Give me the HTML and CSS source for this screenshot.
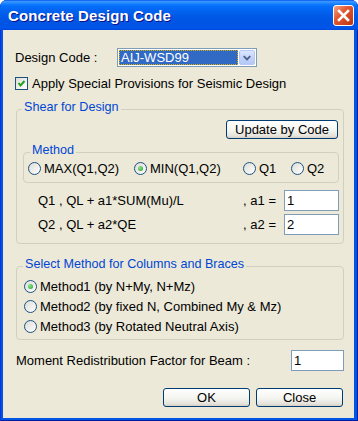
FILE: index.html
```html
<!doctype html>
<html lang="en">
  <head>
    <meta charset="UTF-8" />
    <title>Concrete Design Code</title>
    <link rel="stylesheet" href="styles.css">
  </head>
  <body>
    <div class="window">
      <div class="titlebar">
        <span class="title">Concrete Design Code</span>
        <span class="close-btn">
          <svg viewBox="0 0 19 19" width="19" height="19">
            <path d="M5 5L14 14M14 5L5 14" stroke="#FFFFFF" stroke-width="2.6" stroke-linecap="square" />
          </svg>
        </span>
      </div>
      <div class="client">
        <div class="code-row">
          <span class="code-label">Design Code :</span>
          <div class="select">
            <span class="select-value">AIJ-WSD99</span>
            <span class="select-arrow">
              <svg viewBox="0 0 15 15" width="15" height="15">
                <path d="M4 6L7.5 9.5L11 6" fill="none" stroke="#4d6185" stroke-width="2" />
              </svg>
            </span>
          </div>
        </div>
        <div class="check-row">
          <span class="checkbox">
            <svg viewBox="0 0 11 11" width="11" height="11">
              <path d="M2.5 5L4.5 7.5L8.5 3" fill="none" stroke="#21a121" stroke-width="2" />
            </svg>
          </span>
          Apply Special Provisions for Seismic Design
        </div>

        <fieldset class="group shear">
          <legend>Shear for Design</legend>
          <div class="update-row">
            <button class="btn update-btn">Update by Code</button>
          </div>
          <fieldset class="group method">
            <legend>Method</legend>
            <div class="radio-row">
              <span class="radio-item item-max"><span class="radio"></span>MAX(Q1,Q2)</span>
              <span class="radio-item item-min"><span class="radio on"><span class="dot"></span></span>MIN(Q1,Q2)</span>
              <span class="radio-item item-q1"><span class="radio"></span>Q1</span>
              <span class="radio-item"><span class="radio"></span>Q2</span>
            </div>
          </fieldset>
          <div class="formula-row">
            <span class="formula">Q1 , QL + a1*SUM(Mu)/L</span>
            <span class="coef">, a1 =</span>
            <input class="field" type="text" value="1" />
          </div>
          <div class="formula-row second">
            <span class="formula">Q2 , QL + a2*QE</span>
            <span class="coef">, a2 =</span>
            <input class="field" type="text" value="2" />
          </div>
        </fieldset>

        <fieldset class="group columns">
          <legend>Select Method for Columns and Braces</legend>
          <div class="column-option"><span class="radio on"><span class="dot"></span></span>Method1 (by N+My, N+Mz)</div>
          <div class="column-option"><span class="radio"></span>Method2 (by fixed N, Combined My &amp; Mz)</div>
          <div class="column-option"><span class="radio"></span>Method3 (by Rotated Neutral Axis)</div>
        </fieldset>

        <div class="moment-row">
          <span class="moment-label">Moment Redistribution Factor for Beam :</span>
          <input class="field moment-field" type="text" value="1" />
        </div>

        <div class="button-row">
          <button class="btn dialog-btn">OK</button>
          <button class="btn dialog-btn">Close</button>
        </div>
      </div>
    </div>
  </body>
</html>
```

FILE: styles.css
```css
* {
  box-sizing: border-box;
}

body {
  margin: 0;
  background: #ffffff;
  font-family: 'Liberation Sans', Arial, sans-serif;
  font-size: 13px;
  color: #000000;
}

.window {
  width: 358px;
  height: 421px;
  display: flex;
  flex-direction: column;
  background: #0055e5;
  border-radius: 7px 7px 0 0;
  box-shadow: inset 1px 0 #0831d9, inset -1px 0 #001ea0, inset 0 -1px #001ea0;
  overflow: hidden;
}

.titlebar {
  height: 30px;
  flex: none;
  display: flex;
  align-items: center;
  justify-content: space-between;
  padding: 0 4px 0 8px;
  border-radius: 7px 7px 0 0;
  background: linear-gradient(
    to bottom,
    #0058ee 0%,
    #3a93ff 5%,
    #288eff 9%,
    #127dff 14%,
    #036ffc 20%,
    #0262ee 38%,
    #0057e5 60%,
    #0054e3 82%,
    #0055eb 92%,
    #0048dc 100%
  );
}

.title {
  color: #ffffff;
  font-weight: bold;
  font-size: 15px;
  letter-spacing: 0.1px;
  text-shadow: 1px 1px #0f1089;
}

.close-btn {
  width: 21px;
  height: 21px;
  border: 1px solid #ffffff;
  border-radius: 3px;
  background: linear-gradient(135deg, #f0a58a 0%, #e2582f 40%, #cc4420 75%, #b8350f 100%);
  display: flex;
  align-items: center;
  justify-content: center;
}

.client {
  flex: 1;
  margin: 0 4px 3px 3px;
  background: #ece9d8;
  padding: 18px 10px 0 13px;
  display: flex;
  flex-direction: column;
}

/* top rows */

.code-row {
  display: flex;
  align-items: center;
  height: 19px;
  margin-left: -1px;
}

.code-label {
  width: 102px;
}

.select {
  width: 140px;
  height: 19px;
  border: 1px solid #7f9db9;
  background: #ffffff;
  display: flex;
  padding: 1px;
}

.select-value {
  flex: 1;
  background: #316ac5;
  color: #ffffff;
  border: 1px dotted #e0b000;
  padding-left: 1px;
  line-height: 13px;
}

.select-arrow {
  width: 16px;
  margin-left: 1px;
  border: 1px solid #b7c8f3;
  border-radius: 2px;
  background: linear-gradient(#dce6ff, #c3d3fd 50%, #b4c8f5);
  display: flex;
  align-items: center;
  justify-content: center;
}

.check-row {
  display: flex;
  align-items: center;
  gap: 4px;
  height: 13px;
  margin: 10px 0 0 -1px;
}

.checkbox {
  width: 13px;
  height: 13px;
  border: 1px solid #1c5180;
  background: linear-gradient(135deg, #dcdcd7, #ffffff);
  display: flex;
  align-items: center;
  justify-content: center;
}

/* group boxes */

.group {
  margin: 0;
  min-width: 0;
  border: 1px solid #d0d0bf;
  border-radius: 4px;
}

.group legend {
  color: #0046d5;
  font-size: 12.6px;
  line-height: 14px;
  padding: 0 2px 4px;
}

.shear {
  margin-top: 10px;
  padding: 2px 4px 8px 6px;
}

.shear > legend {
  margin-left: -1px;
}

.update-row {
  display: flex;
  justify-content: flex-end;
  padding-right: 1px;
}

.btn {
  font: inherit;
  color: #000000;
  height: 19px;
  padding: 0;
  border: 1px solid #003c74;
  border-radius: 3px;
  background: linear-gradient(#ffffff, #f4f4f0 55%, #e6e4dc 85%, #d6d0c5);
}

.update-btn {
  width: 112px;
}

.method {
  margin-top: 4px;
  padding: 0 4px 7px 4px;
}

.method > legend {
  margin-left: 2px;
}

.radio-row {
  display: flex;
  align-items: center;
  height: 14px;
}

.radio-item {
  display: flex;
  align-items: center;
  gap: 3px;
}

.item-max {
  width: 106px;
}

.item-min {
  width: 109px;
}

.item-q1 {
  width: 48px;
}

.radio {
  width: 13px;
  height: 13px;
  flex: none;
  border: 1px solid #1c5180;
  border-radius: 50%;
  background: linear-gradient(135deg, #dcdcd7, #ffffff);
  display: flex;
  align-items: center;
  justify-content: center;
}

.dot {
  width: 5px;
  height: 5px;
  border-radius: 50%;
  background: radial-gradient(circle at 35% 35%, #8fe48f, #21a121);
}

.formula-row {
  display: flex;
  align-items: center;
  margin-top: 7px;
  padding-left: 15px;
}

.formula-row.second {
  margin-top: 3px;
}

.formula {
  flex: 1;
}

.coef {
  margin-right: 8px;
}

.field {
  width: 55px;
  height: 21px;
  margin: 0;
  border: 1px solid #7f9db9;
  background: #ffffff;
  padding: 0 2px;
  font: inherit;
  color: #000000;
}

.columns {
  margin-top: 13px;
  padding: 1px 4px 3px 7px;
}

.columns > legend {
  margin-left: -1px;
}

.column-option {
  display: flex;
  align-items: center;
  gap: 3px;
  height: 20px;
}

/* bottom rows */

.moment-row {
  display: flex;
  align-items: center;
  justify-content: space-between;
  margin-top: 10px;
}

.moment-field {
  width: 53px;
}

.button-row {
  display: flex;
  justify-content: flex-end;
  gap: 6px;
  margin-top: 17px;
  padding-right: 1px;
}

.dialog-btn {
  width: 87px;
}
```
